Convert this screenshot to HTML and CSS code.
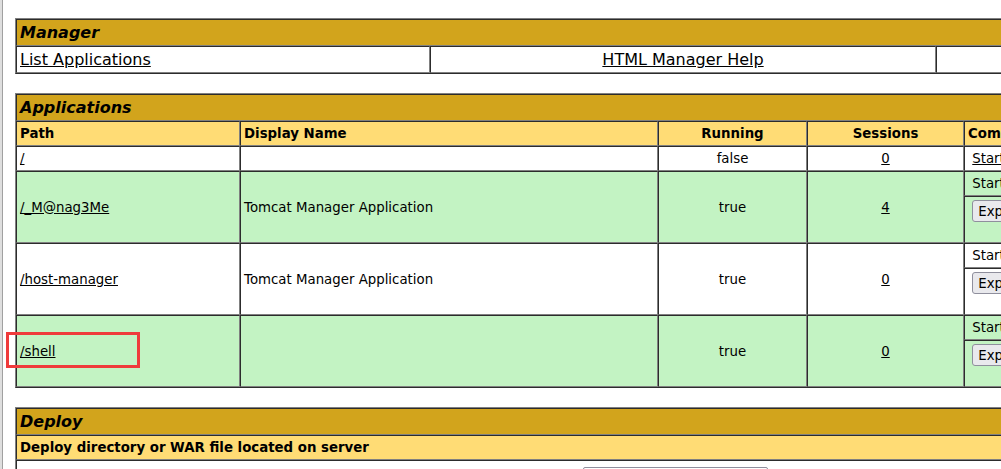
FILE: index.html
```
<!DOCTYPE html>
<html>
<head>
<meta charset="utf-8">
<title>Tomcat Web Application Manager</title>
<link rel="stylesheet" href="styles.css">
</head>
<body>
<div class="page">
  <table class="grid">
    <colgroup><col class="m1"><col class="m2"><col class="m3"><col></colgroup>
    <tr><td colspan="4" class="title">Manager</td></tr>
    <tr>
      <td class="row-left"><a href="#">List Applications</a></td>
      <td class="row-center"><a href="#">HTML Manager Help</a></td>
      <td class="row-center"><a href="#">Manager Help</a></td>
      <td class="row-right"><a href="#">Server Status</a></td>
    </tr>
  </table>

  <table class="grid spaced">
    <colgroup><col class="a1"><col class="a2"><col class="a3"><col class="a4"><col></colgroup>
    <tr><td colspan="5" class="title">Applications</td></tr>
    <tr>
      <td class="hdr left">Path</td>
      <td class="hdr left">Display Name</td>
      <td class="hdr center">Running</td>
      <td class="hdr center">Sessions</td>
      <td class="hdr left">Commands</td>
    </tr>
    <tr>
      <td class="cell left"><a href="#">/</a></td>
      <td class="cell left"></td>
      <td class="cell center">false</td>
      <td class="cell center"><a href="#">0</a></td>
      <td class="cell left">&nbsp;<a href="#">Start</a>&nbsp;&nbsp;Stop&nbsp;&nbsp;<a href="#">Reload</a>&nbsp;&nbsp;<a href="#">Undeploy</a></td>
    </tr>
    <tr class="green">
      <td class="cell left" rowspan="2"><a href="#">/_M@nag3Me</a></td>
      <td class="cell left" rowspan="2">Tomcat Manager Application</td>
      <td class="cell center" rowspan="2">true</td>
      <td class="cell center" rowspan="2"><a href="#">4</a></td>
      <td class="cell left">&nbsp;Start&nbsp;&nbsp;<a href="#">Stop</a>&nbsp;&nbsp;<a href="#">Reload</a>&nbsp;&nbsp;<a href="#">Undeploy</a></td>
    </tr>
    <tr class="green">
      <td class="cell left top">
        <form class="expire">&nbsp;<button type="button" class="btn">Expire sessions</button>&nbsp;with idle &ge;&nbsp;<input class="idle" type="text" value="30">&nbsp;minutes&nbsp;</form>
      </td>
    </tr>
    <tr>
      <td class="cell left" rowspan="2"><a href="#">/host-manager</a></td>
      <td class="cell left" rowspan="2">Tomcat Manager Application</td>
      <td class="cell center" rowspan="2">true</td>
      <td class="cell center" rowspan="2"><a href="#">0</a></td>
      <td class="cell left">&nbsp;Start&nbsp;&nbsp;<a href="#">Stop</a>&nbsp;&nbsp;<a href="#">Reload</a>&nbsp;&nbsp;<a href="#">Undeploy</a></td>
    </tr>
    <tr>
      <td class="cell left top">
        <form class="expire">&nbsp;<button type="button" class="btn">Expire sessions</button>&nbsp;with idle &ge;&nbsp;<input class="idle" type="text" value="30">&nbsp;minutes&nbsp;</form>
      </td>
    </tr>
    <tr class="green">
      <td class="cell left" rowspan="2"><a href="#">/shell</a></td>
      <td class="cell left" rowspan="2"></td>
      <td class="cell center" rowspan="2">true</td>
      <td class="cell center" rowspan="2"><a href="#">0</a></td>
      <td class="cell left">&nbsp;Start&nbsp;&nbsp;<a href="#">Stop</a>&nbsp;&nbsp;<a href="#">Reload</a>&nbsp;&nbsp;<a href="#">Undeploy</a></td>
    </tr>
    <tr class="green">
      <td class="cell left top">
        <form class="expire">&nbsp;<button type="button" class="btn">Expire sessions</button>&nbsp;with idle &ge;&nbsp;<input class="idle" type="text" value="30">&nbsp;minutes&nbsp;</form>
      </td>
    </tr>
  </table>

  <table class="grid spaced">
    <tr><td class="title">Deploy</td></tr>
    <tr><td class="hdr left">Deploy directory or WAR file located on server</td></tr>
    <tr>
      <td class="cell left">
        <form class="deploy">
          <div class="dlabel">Context Path (required):</div>
          <div class="dinput"><input class="path" type="text"></div>
        </form>
      </td>
    </tr>
  </table>
</div>
<div class="mark"></div>
</body>
</html>
```

FILE: styles.css
```
html, body {
  margin: 0;
  padding: 0;
}
body {
  position: relative;
  height: 469px;
  overflow: hidden;
  background: #ffffff;
  border-left: 2px solid #dedede;
  font-family: "DejaVu Sans", sans-serif;
}
.page {
  border-left: 1px solid #a0a0a0;
  padding: 18px 0 0 12px;
  width: 1600px;
  min-height: 469px;
}
table.grid {
  width: 100%;
  table-layout: fixed;
  border-spacing: 0;
  border: 1px outset gray;
}
table.spaced {
  margin-top: 19px;
}
.grid td {
  border: 1px inset gray;
  padding: 3px;
  font-family: "DejaVu Sans", sans-serif;
  font-size: 16px;
  line-height: 19px;
  color: #000;
  vertical-align: middle;
}
.grid a {
  color: #000;
}
col.m1 { width: 414px; }
col.m2 { width: 506px; }
col.m3 { width: 506px; }
col.a1 { width: 224px; }
col.a2 { width: 418px; }
col.a3 { width: 149px; }
col.a4 { width: 157px; }

.grid td.title {
  background: #d2a41c;
  font-weight: bold;
  font-style: italic;
  text-align: left;
  vertical-align: top;
}
.grid td.hdr {
  background: #ffdc75;
  font-weight: bold;
  font-size: 13.33px;
  line-height: 17px;
  vertical-align: top;
}
.grid td.cell {
  font-size: 13.33px;
  line-height: 17px;
}
.left { text-align: left; }
.center { text-align: center; }
.row-left { text-align: left; }
.row-center { text-align: center; }
.row-right { text-align: right; }
.grid td.top { vertical-align: top; }
.green td { background: #c3f3c3; }

.expire {
  margin: 0;
  height: 39px;
  line-height: 22px;
  white-space: nowrap;
}
.btn {
  font-family: "DejaVu Sans", sans-serif;
  font-size: 13.33px;
  padding: 1px 5px;
  height: 22px;
  border: 1px solid #8f8f9d;
  border-radius: 3px;
  background: #e9e9ed;
  color: #000;
  vertical-align: top;
}
.idle {
  width: 44px;
  font-family: "DejaVu Sans", sans-serif;
  font-size: 13.33px;
  padding: 1px 2px;
  border: 1px solid #8f8f9d;
  vertical-align: top;
}
.deploy {
  margin: 0;
  display: grid;
  grid-template-columns: 560px 1fr;
  align-items: center;
}
.dlabel {
  padding: 3px;
  text-align: right;
  font-size: 13.33px;
}
.dinput {
  padding: 3px;
}
.path {
  width: 179px;
  height: 17px;
  padding: 1px 2px;
  border: 1px solid #8f8f9d;
  border-radius: 2px;
  font-family: "DejaVu Sans", sans-serif;
  font-size: 13.33px;
}
.mark {
  position: absolute;
  left: 4px;
  top: 332px;
  width: 128px;
  height: 30px;
  border: 3px solid #ef3b3b;
}
```
